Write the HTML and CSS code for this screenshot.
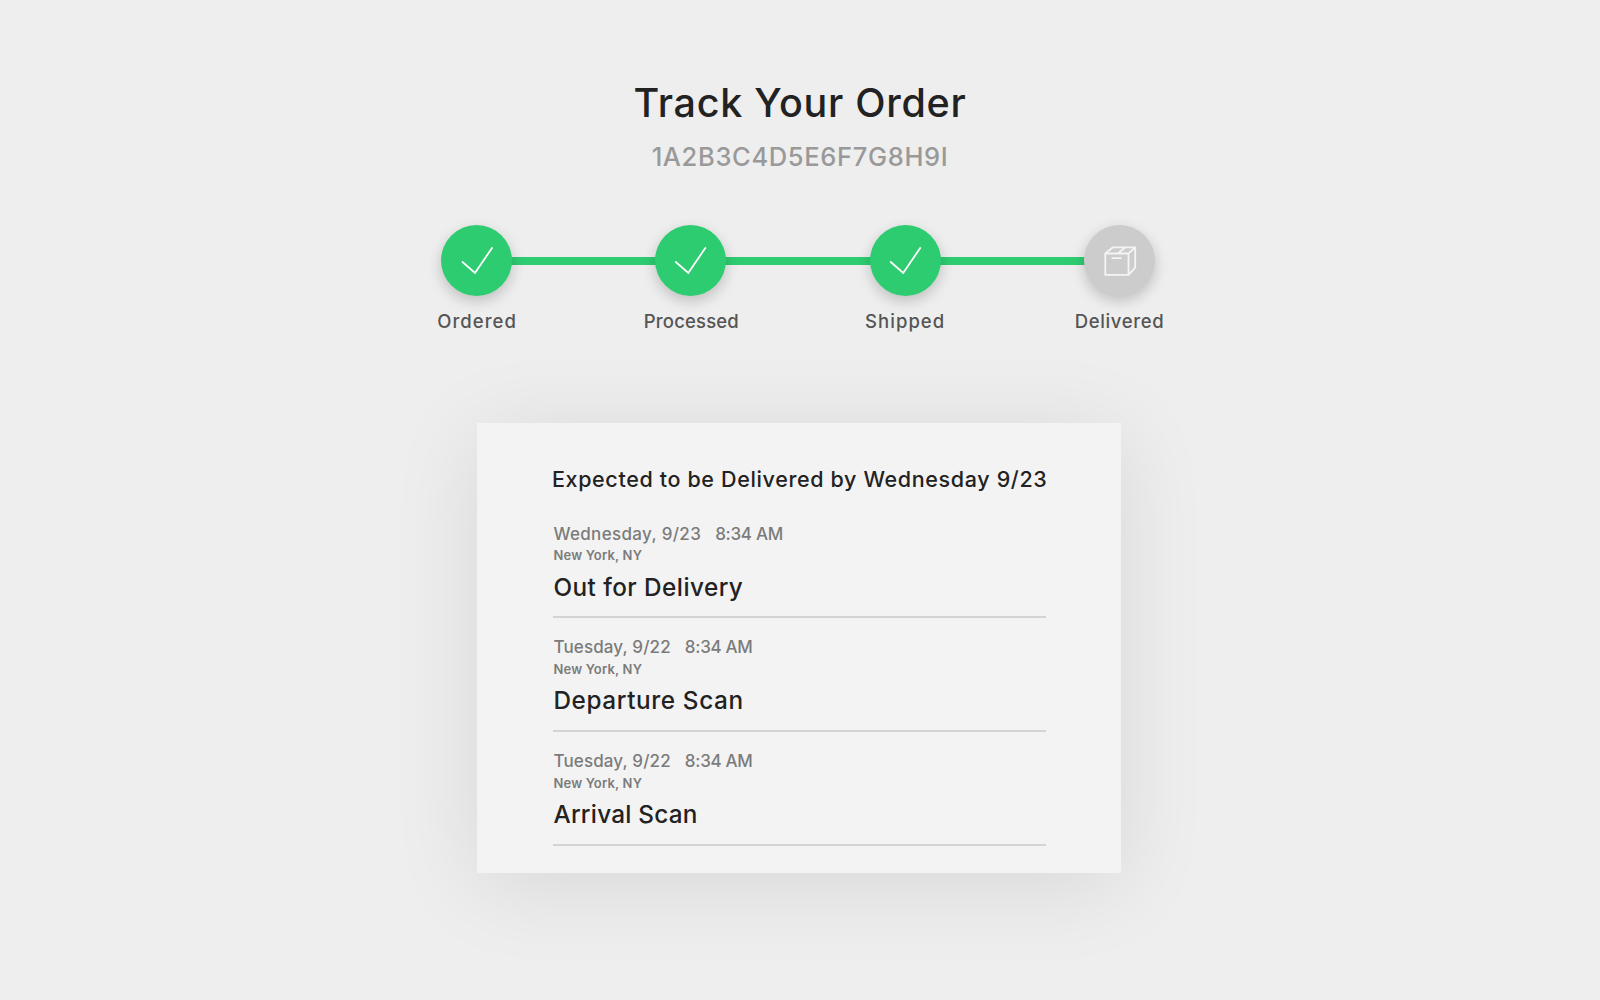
FILE: index.html
```html
<!DOCTYPE html>
<html lang="en">
<head>
  <meta charset="utf-8">
  <title>Track Your Order</title>
  <link rel="stylesheet" href="styles.css">
</head>
<body>
  <main class="page">
    <header class="header">
      <h1 class="title">Track Your Order</h1>
      <p class="order-number">1A2B3C4D5E6F7G8H9I</p>
    </header>

    <ol class="steps">
      <li class="step">
        <span class="dot"><svg class="icon" viewBox="0 0 71 71"><path d="M21.5 37 34 48 51 23"/></svg></span>
        <span class="label label-ordered">Ordered</span>
      </li>
      <li class="step">
        <span class="dot"><svg class="icon" viewBox="0 0 71 71"><path d="M20.8 37 33.3 48 50.3 23"/></svg></span>
        <span class="label label-processed">Processed</span>
      </li>
      <li class="step">
        <span class="dot"><svg class="icon" viewBox="0 0 71 71"><path d="M20.7 37 33.2 48 50.2 23"/></svg></span>
        <span class="label label-shipped">Shipped</span>
      </li>
      <li class="step">
        <span class="dot dot-pending"><svg class="icon icon-box" viewBox="0 0 71 71"><path d="M21.3 28.5H44.5V49.9H21.3ZM21.3 28.5 29 22.3H51.2L44.5 28.5M51.2 22.3V42.6L44.5 49.9M33.8 28.5 41.5 22.3M28.3 33.2H36.8"/></svg></span>
        <span class="label label-delivered">Delivered</span>
      </li>
    </ol>

    <section class="card">
      <h2 class="card-title">Expected to be Delivered by Wednesday 9/23</h2>
      <ul class="events">
        <li class="event">
          <p class="when"><span class="date date-long">Wednesday, 9/23</span><span class="time">8:34 AM</span></p>
          <p class="place">New York, NY</p>
          <p class="status">Out for Delivery</p>
        </li>
        <li class="event">
          <p class="when"><span class="date">Tuesday, 9/22</span><span class="time">8:34 AM</span></p>
          <p class="place">New York, NY</p>
          <p class="status status-departure">Departure Scan</p>
        </li>
        <li class="event">
          <p class="when"><span class="date">Tuesday, 9/22</span><span class="time">8:34 AM</span></p>
          <p class="place">New York, NY</p>
          <p class="status status-arrival">Arrival Scan</p>
        </li>
      </ul>
    </section>
  </main>
</body>
</html>
```
FILE: styles.css
```css
* {
  box-sizing: border-box;
  margin: 0;
  padding: 0;
}

body {
  background: #eeeeee;
  color: #222222;
  font-family: Inter, "Open Sans", sans-serif;
  font-weight: 500;
}

ol,
ul {
  list-style: none;
}

.page {
  display: flex;
  flex-direction: column;
  align-items: center;
  height: 1000px;
  padding-top: 79px;
  overflow: hidden;
}

.header {
  display: flex;
  flex-direction: column;
  align-items: center;
  gap: 14px;
}

.title {
  font-size: 39.5px;
  font-weight: 500;
  line-height: 48px;
  letter-spacing: 0.71px;
}

.order-number {
  color: #999999;
  font-size: 25.5px;
  line-height: 32px;
  letter-spacing: 0.66px;
}

.steps {
  display: grid;
  grid-template-columns: repeat(4, 214.3px);
  margin: 52.3px 4px 0 0;
}

.step {
  display: flex;
  flex-direction: column;
  align-items: center;
  gap: 12.3px;
  position: relative;
}

/* connector from the previous step's centre to this one's */
.step + .step::before {
  content: "";
  position: absolute;
  z-index: -1;
  top: 31.4px;
  right: 50%;
  width: 100%;
  height: 8px;
  background: #2ecc71;
}

.dot {
  width: 71px;
  height: 71px;
  border-radius: 50%;
  background: #2ecc71;
  box-shadow: 0 5px 14px rgba(0, 0, 0, 0.2);
}

.dot-pending {
  background: #cccccc;
}

.icon {
  display: block;
  width: 71px;
  height: 71px;
  fill: none;
  stroke: #ffffff;
  stroke-width: 1.8;
  stroke-linecap: round;
  stroke-linejoin: miter;
}

.icon-box {
  stroke: #f4f4f4;
  stroke-linejoin: round;
}

.label {
  color: #555555;
  font-size: 18.5px;
  line-height: 24px;
  white-space: nowrap;
}

.label-ordered {
  margin-left: 1px;
  letter-spacing: 1.05px;
}

.label-processed {
  margin-left: 1px;
  letter-spacing: 0.16px;
}

.label-shipped {
  letter-spacing: 1.05px;
}

.label-delivered {
  letter-spacing: 0.64px;
}

.card {
  width: 644px;
  height: 450px;
  margin: 90.2px 1.2px 0 0;
  padding: 42px 75px 0 76px;
  background: #f3f3f3;
  box-shadow: 0 12px 84px rgba(0, 0, 0, 0.095);
}

.card-title {
  margin-left: -1.5px;
  font-size: 21.5px;
  font-weight: 500;
  line-height: 28px;
  letter-spacing: 0.64px;
  white-space: nowrap;
}

.events {
  margin-top: 30px;
}

.event {
  padding-bottom: 13.5px;
  border-bottom: 2px solid #d3d3d3;
}

.event + .event {
  margin-top: 18.2px;
}

.when {
  display: flex;
  gap: 14px;
  color: #7b7b7b;
  font-size: 17px;
  line-height: 22px;
}

.date {
  letter-spacing: 0.14px;
}

.date-long {
  letter-spacing: 0.34px;
}

.time {
  letter-spacing: -0.29px;
}

.place {
  margin-top: 1.5px;
  color: #7b7b7b;
  font-size: 13px;
  font-weight: 600;
  line-height: 18px;
  letter-spacing: 0.18px;
}

.status {
  margin-top: 6.5px;
  font-size: 24.3px;
  line-height: 32px;
  letter-spacing: 0.45px;
}

.status-departure {
  letter-spacing: 0.62px;
}

.status-arrival {
  letter-spacing: 0.25px;
}
```
